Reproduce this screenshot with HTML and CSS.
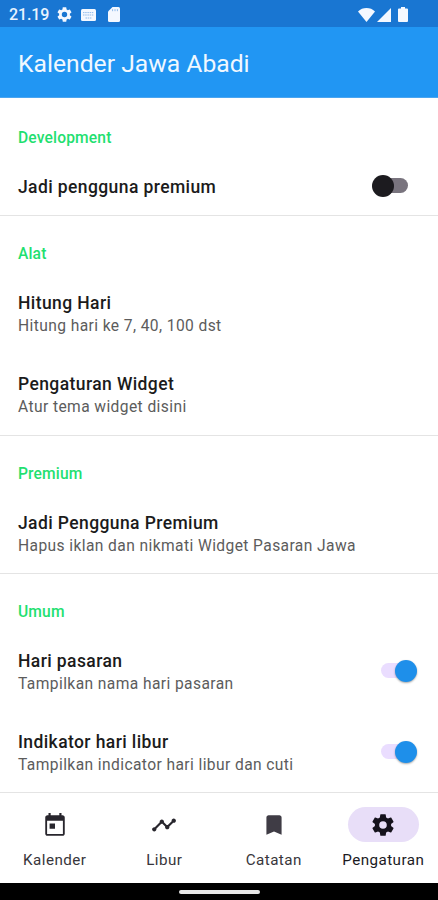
FILE: index.html
```html
<!DOCTYPE html>
<html lang="id">
<head>
    <meta charset="utf-8" />
    <meta name="viewport" content="width=device-width, initial-scale=1" />
    <title>Kalender Jawa Abadi</title>
    <link rel="stylesheet" href="styles.css">
</head>

<body>
    <div id="container">
        <div class="statusbar">
            <span class="time">21.19</span>
            <svg class="st-gear" viewBox="2 2 20 20"><path d="M19.14 12.94c.04-.3.06-.61.06-.94s-.02-.64-.07-.94l2.03-1.58a.49.49 0 0 0 .12-.61l-1.92-3.32a.49.49 0 0 0-.59-.22l-2.39.96a7 7 0 0 0-1.62-.94l-.36-2.54a.48.48 0 0 0-.48-.41h-3.84c-.24 0-.43.17-.47.41l-.36 2.54c-.59.24-1.13.57-1.62.94l-2.39-.96a.48.48 0 0 0-.59.22L2.74 8.87a.48.48 0 0 0 .12.61l2.03 1.58a6 6 0 0 0 0 1.88l-2.03 1.58a.49.49 0 0 0-.12.61l1.92 3.32c.12.22.37.29.59.22l2.39-.96c.5.38 1.03.7 1.62.94l.36 2.54c.05.24.24.41.48.41h3.84c.24 0 .44-.17.47-.41l.36-2.54a7 7 0 0 0 1.62-.94l2.39.96c.22.08.47 0 .59-.22l1.92-3.32a.48.48 0 0 0-.12-.61zM12 15.6a3.6 3.6 0 1 1 0-7.2 3.6 3.6 0 0 1 0 7.2z"/></svg>
            <svg class="st-keyboard" viewBox="0 0 15 12"><rect width="15" height="12" rx="1.5"/><path class="keys" d="M2 3.6h11M2 6h11M4.5 9h6"/></svg>
            <svg class="st-card" viewBox="0 0 12 15"><path d="M4.5 0H10.5Q12 0 12 1.5V13.5Q12 15 10.5 15H1.5Q0 15 0 13.5V4.5z"/><path class="pins" d="M4.6 2.2v2M7 2.2v2M9.4 2.2v2"/></svg>
            <span class="spacer"></span>
            <svg class="st-wifi" viewBox="0 0 17 14"><path d="M8.5 14L0 3.4Q3.6 0 8.5 0T17 3.4z"/></svg>
            <svg class="st-signal" viewBox="0 0 14 14"><path d="M14 0v14H0z"/></svg>
            <svg class="st-battery" viewBox="0 0 10 15"><path d="M3 0h4v1.5h2q1 0 1 1V14q0 1-1 1H1q-1 0-1-1V2.5q0-1 1-1h2z"/></svg>
        </div>
        <header class="appbar">
            <h1 id="title">Kalender Jawa Abadi</h1>
        </header>
        <main>
            <section class="dev">
                <h2>Development</h2>
                <div class="item single">
                    <p class="name">Jadi pengguna premium</p>
                    <span class="switch"></span>
                </div>
            </section>
            <section class="tools">
                <h2>Alat</h2>
                <div class="item">
                    <div>
                        <p class="name">Hitung Hari</p>
                        <p class="info">Hitung hari ke 7, 40, 100 dst</p>
                    </div>
                </div>
                <div class="item">
                    <div>
                        <p class="name">Pengaturan Widget</p>
                        <p class="info">Atur tema widget disini</p>
                    </div>
                </div>
            </section>
            <section>
                <h2>Premium</h2>
                <div class="item">
                    <div>
                        <p class="name">Jadi Pengguna Premium</p>
                        <p class="info">Hapus iklan dan nikmati Widget Pasaran Jawa</p>
                    </div>
                </div>
            </section>
            <section>
                <h2>Umum</h2>
                <div class="item">
                    <div>
                        <p class="name">Hari pasaran</p>
                        <p class="info">Tampilkan nama hari pasaran</p>
                    </div>
                    <span class="switch on"></span>
                </div>
                <div class="item">
                    <div>
                        <p class="name">Indikator hari libur</p>
                        <p class="info">Tampilkan indicator hari libur dan cuti</p>
                    </div>
                    <span class="switch on"></span>
                </div>
            </section>
        </main>
        <nav>
            <a class="tab">
                <span class="pill"><svg viewBox="0 0 24 24"><path d="M19 3h-1V1h-2v2H8V1H6v2H5c-1.1 0-2 .9-2 2v15c0 1.1.9 2 2 2h14c1.1 0 2-.9 2-2V5c0-1.100-.9-2-2-2zm.3 17.300H4.700V8h14.600v12.300zM7 10.500h5v5H7z"/></svg></span>
                Kalender
            </a>
            <a class="tab">
                <span class="pill"><svg viewBox="0 0 24 24"><path d="M23 8c0 1.100-.9 2-2 2-.18 0-.35-.02-.51-.07l-3.560 3.550c.05.16.07.34.07.52 0 1.100-.9 2-2 2s-2-.9-2-2c0-.18.02-.36.07-.52l-2.550-2.550c-.16.05-.34.07-.52.07s-.36-.02-.52-.07l-4.550 4.560c.05.16.07.33.07.51 0 1.100-.9 2-2 2s-2-.9-2-2 .9-2 2-2c.18 0 .35.02.51.07l4.560-4.550C8.020 9.360 8 9.180 8 9c0-1.100.9-2 2-2s2 .9 2 2c0 .18-.02.36-.07.52l2.550 2.550c.16-.05.34-.07.52-.07s.36.02.52.07l3.550-3.560C19.020 8.350 19 8.180 19 8c0-1.100.9-2 2-2s2 .9 2 2z"/></svg></span>
                Libur
            </a>
            <a class="tab">
                <span class="pill"><svg class="bookmark" viewBox="0 0 24 24"><path d="M17 3H7c-1.100 0-2 .9-2 2v16l7-3 7 3V5c0-1.100-.9-2-2-2z"/></svg></span>
                Catatan
            </a>
            <a class="tab active">
                <span class="pill"><svg viewBox="0 0 24 24"><path d="M19.430 12.980c.04-.32.07-.64.07-.98s-.03-.66-.07-.98l2.110-1.650c.19-.15.24-.42.12-.64l-2-3.460c-.12-.22-.39-.3-.61-.22l-2.490 1c-.52-.4-1.080-.73-1.690-.98l-.38-2.650A.49.49 0 0 0 14 2h-4c-.25 0-.46.18-.49.42l-.38 2.650c-.61.25-1.170.59-1.690.98l-2.490-1c-.23-.09-.49 0-.61.22l-2 3.460c-.13.22-.07.49.12.64l2.110 1.650c-.04.32-.07.65-.07.98s.03.66.07.98l-2.110 1.650c-.19.15-.24.42-.12.64l2 3.460c.12.22.39.3.61.22l2.490-1c.52.4 1.080.73 1.690.98l.38 2.650c.03.24.24.42.49.42h4c.25 0 .46-.18.49-.42l.38-2.650c.61-.25 1.170-.59 1.690-.98l2.490 1c.23.09.49 0 .61-.22l2-3.460c.12-.22.07-.49-.12-.64zM12 15.500a3.500 3.500 0 1 1 0-7 3.500 3.500 0 0 1 0 7z"/></svg></span>
                Pengaturan
            </a>
        </nav>
        <footer><span class="handle"></span></footer>
    </div>
</body>

</html>
```

FILE: styles.css
```css
body{
    padding: 0;
    margin: 0;
    font-family: Roboto, sans-serif;
    background-color: #fff;
}
h1, h2, p {
    margin: 0;
}
#container {
    display: flex;
    flex-direction: column;
    height: 900px;
    overflow: hidden;
}

/* status bar */
.statusbar {
    box-sizing: border-box;
    display: flex;
    align-items: center;
    height: 27px;
    padding: 2px 30px 0 9px;
    background-color: #1976d2;
    color: #e8f3ff;
}
.statusbar svg {
    fill: #f4f8ff;
}
.time {
    width: 48px;
    font-size: 16px;
    font-weight: 500;
    letter-spacing: -0.1px;
}
.st-gear {
    width: 15px;
    height: 15px;
}
.st-keyboard {
    width: 15px;
    height: 12px;
    margin-left: 9px;
}
.st-card {
    width: 12px;
    height: 15px;
    margin-left: 12px;
}
.keys, .pins {
    fill: none;
    stroke: #8fbaea;
    stroke-width: 1;
}
.keys {
    stroke-dasharray: 1.5 0.7;
}
.spacer {
    flex: 1;
}
.st-wifi {
    width: 17px;
    height: 14px;
}
.st-signal {
    width: 14px;
    height: 14px;
    margin-left: 2px;
}
.st-battery {
    width: 10px;
    height: 15px;
    margin-left: 7px;
}

.appbar {
    box-sizing: border-box;
    display: flex;
    align-items: center;
    height: 71px;
    padding: 3px 18px 0;
    background-color: #2196f3;
    border-bottom: 1px solid #4ba5f0;
}
#title{
    color: #f0f8ff;
    font-size: 24.7px;
    font-weight: 400;
}

/* settings list */
section {
    border-bottom: 1px solid #e4e4e4;
}
h2 {
    box-sizing: border-box;
    height: 56px;
    padding: 28px 18px 0;
    color: #1fe070;
    font-size: 15.6px;
    font-weight: 500;
    line-height: 20px;
    letter-spacing: 0.15px;
}
.dev h2 {
    height: 58px;
    padding-top: 30px;
}
.tools h2 {
    height: 57px;
}
.item {
    box-sizing: border-box;
    display: flex;
    align-items: center;
    justify-content: space-between;
    height: 81px;
    padding: 2px 21px 0 18px;
}
.tools .item {
    padding-top: 1px;
}
.single {
    height: 59px;
    padding-right: 30px;
}
.name {
    color: #1b1b1b;
    font-size: 17.5px;
    font-weight: 500;
    line-height: 24px;
    letter-spacing: 0.4px;
}
.info {
    color: #5c5c5c;
    font-size: 15.6px;
    line-height: 22px;
    letter-spacing: 0.4px;
}
.switch {
    display: flex;
    align-items: center;
    width: 36px;
    height: 22px;
}
.single .switch {
    margin-bottom: 2px;
}
.switch::before {
    content: "";
    width: 22px;
    height: 22px;
    border-radius: 50%;
    background-color: #1c1b1f;
    z-index: 1;
}
.switch::after {
    content: "";
    width: 24px;
    height: 15px;
    margin-left: -10px;
    border-radius: 8px;
    background-color: #79747e;
}
.switch.on {
    flex-direction: row-reverse;
    margin-bottom: 2px;
}
.switch.on::before {
    background-color: #1e8fea;
    box-shadow: 0 1px 2px rgba(0, 0, 0, 0.35);
}
.switch.on::after {
    margin: 0 -10px 0 0;
    background-color: #eaddff;
}

/* bottom navigation */
nav {
    display: flex;
    flex: 1;
    background-color: #fff;
}
.tab {
    display: flex;
    flex: 1;
    flex-direction: column;
    align-items: center;
    padding-top: 14px;
    color: #38363b;
    font-size: 15.2px;
    line-height: 20px;
    letter-spacing: 0.45px;
}
.pill {
    display: flex;
    align-items: center;
    justify-content: center;
    width: 71px;
    height: 35px;
    margin-bottom: 8px;
    border-radius: 18px;
}
.pill svg {
    width: 26px;
    height: 26px;
    fill: #28262d;
}
.pill .bookmark {
    fill: #3f3c45;
}
.active {
    color: #1c1b1f;
}
.active .pill {
    background-color: #e8def8;
}
.active .pill svg {
    fill: #15121c;
}
footer {
    display: flex;
    align-items: center;
    justify-content: center;
    height: 17px;
    background-color: #000;
}
.handle {
    width: 81px;
    height: 4px;
    margin-top: 1px;
    border-radius: 2px;
    background-color: #e8e8e8;
}
```
